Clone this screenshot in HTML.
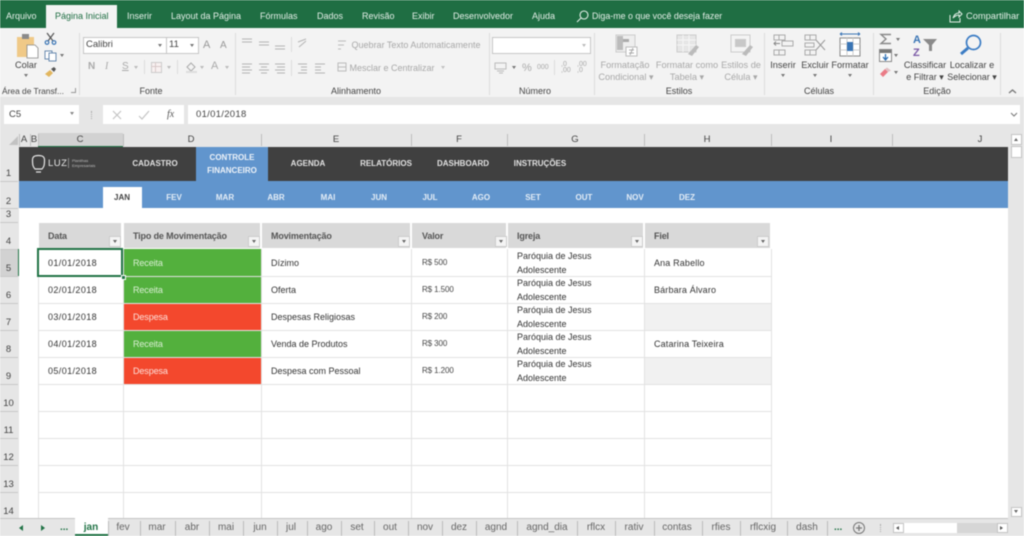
<!DOCTYPE html>
<html lang="pt">
<head>
<meta charset="utf-8">
<title>Excel</title>
<style>
html,body{margin:0;padding:0;width:1024px;height:536px;overflow:hidden;background:#fff}
#p{position:relative;width:1024px;height:536px;overflow:hidden;font-family:"Liberation Sans",sans-serif;filter:blur(.4px)}
#p div,#p svg{position:absolute}
.t{white-space:nowrap;line-height:12px;height:12px}
.tab{top:10px;font-size:9px;color:#e4efe8}
.rb{font-size:9.2px;color:#444;text-align:center;transform:translateX(-50%)}
.dim{font-size:9.2px;color:#a8a8a8;text-align:center;transform:translateX(-50%)}
.grp{top:85px;font-size:9px;color:#444;transform:translateX(-50%)}
.ch{top:134px;font-size:9.5px;color:#444;transform:translateX(-50%)}
.rh{left:0;width:17px;text-align:center;font-size:9.5px;color:#444}
.nav{top:158px;font-size:8px;font-weight:bold;color:#e2e2e2;transform:translateX(-50%)}
.m{top:192px;font-size:8px;font-weight:bold;color:#e4edf6;transform:translateX(-50%)}
.hd{top:230px;font-size:9px;font-weight:bold;color:#555;letter-spacing:-.15px}
.c{font-size:9px;color:#333}
.d{letter-spacing:.4px}
.v{font-size:8px;letter-spacing:-.1px;color:#444}
.n{letter-spacing:.15px}
.w{letter-spacing:-.1px}
.st{top:522px;font-size:10px;color:#666;transform:translateX(-50%)}
.sep{top:521px;width:1px;height:15px;background:#bcbcbc}
.fb{width:10px;height:9px;background:#f4f4f4;border:1px solid #ccc;top:236px}
.fb:after{content:"";position:absolute;left:3px;top:3px;border:2px solid transparent;border-top:3px solid #666}
.vl{width:1px;background:#e2e2e2}
.hl{height:1px;background:#e2e2e2}
.hdv{top:134px;width:1px;height:12px;background:#bdbdbd}
.rs{left:0;width:18px;height:1px;background:#c8c8c8}
.gs{top:33px;width:1px;height:62px;background:#dcdcdc}
.ar{width:0;height:0;border:2px solid transparent;border-top:3px solid #777}
</style>
</head>
<body>
<div id="p">
<!-- title bar -->
<div style="left:0;top:0;width:1024px;height:28px;background:#1f6e43"></div>
<div style="left:46px;top:5px;width:71px;height:23px;background:#f3f3f3"></div>
<div class="t tab" style="left:6px">Arquivo</div>
<div class="t tab" style="left:55px;color:#1f6e43">Página Inicial</div>
<div class="t tab" style="left:127px">Inserir</div>
<div class="t tab" style="left:171px">Layout da Página</div>
<div class="t tab" style="left:260px">Fórmulas</div>
<div class="t tab" style="left:317px">Dados</div>
<div class="t tab" style="left:362px">Revisão</div>
<div class="t tab" style="left:412px">Exibir</div>
<div class="t tab" style="left:453px">Desenvolvedor</div>
<div class="t tab" style="left:532px">Ajuda</div>
<svg style="left:576px;top:10px" width="13" height="13" viewBox="0 0 13 13" fill="none" stroke="#e4efe8" stroke-width="1.1"><circle cx="8" cy="5" r="4"/><path d="M5 8L1 12"/></svg>
<div class="t tab" style="left:592px;font-size:8.9px">Diga-me o que você deseja fazer</div>
<svg style="left:949px;top:10px" width="14" height="13" viewBox="0 0 14 13" fill="none" stroke="#e4efe8" stroke-width="1"><path d="M1 5v7h10V8M4 8c1-3 3-5 6-5V1l3 3-3 3V5C8 5 6 6 4 8z"/></svg>
<div class="t tab" style="left:966px;font-size:9.3px">Compartilhar</div>

<!-- ribbon -->
<div style="left:0;top:28px;width:1024px;height:69px;background:#f3f3f3"></div>
<div style="left:0;top:97px;width:1024px;height:36px;background:#e6e6e6"></div>
<div class="gs" style="left:79px"></div>
<div class="gs" style="left:235px"></div>
<div class="gs" style="left:489px"></div>
<div class="gs" style="left:594px"></div>
<div class="gs" style="left:764px"></div>
<div class="gs" style="left:873px"></div>
<div class="gs" style="left:1000px"></div>

<!-- clipboard -->
<svg style="left:16px;top:33px" width="24" height="26" viewBox="0 0 24 26"><rect x="1" y="4" width="17" height="20" fill="#f0c987"/><rect x="6" y="1" width="7" height="5" fill="#8a8a8a"/><path d="M11 12h8l3 3v10H11z" fill="#fff" stroke="#888" stroke-width=".8"/></svg>
<div class="t rb" style="left:26px;top:59px">Colar</div>
<div class="ar" style="left:24px;top:74px"></div>
<svg style="left:44px;top:32px" width="13" height="13" viewBox="0 0 13 13" fill="none" stroke="#555" stroke-width="1.2"><path d="M3 1l6 8M10 1L4 9"/><circle cx="3" cy="10.5" r="1.8" stroke="#3a75b5"/><circle cx="10" cy="10.5" r="1.8" stroke="#3a75b5"/></svg>
<svg style="left:44px;top:50px" width="13" height="12" viewBox="0 0 13 12" fill="#fff" stroke="#5a7fa8" stroke-width=".9"><rect x="1" y="1" width="7" height="8"/><rect x="5" y="3" width="7" height="8"/></svg>
<div class="ar" style="left:60px;top:54px"></div>
<svg style="left:44px;top:66px" width="13" height="12" viewBox="0 0 13 12"><path d="M1 8l5-4 3 3-4 4z" fill="#e2b65e"/><path d="M7 3l3-2 2 2-2 3z" fill="#555"/></svg>
<div class="t grp" style="left:33px;font-size:8.4px">Área de Transf...</div>
<div style="left:71px;top:88px;width:4px;height:4px;border-right:1px solid #999;border-bottom:1px solid #999"></div>

<!-- fonte -->
<div style="left:83px;top:37px;width:82px;height:15px;background:#fff;border:1px solid #c6c6c6"></div>
<div style="left:166px;top:37px;width:31px;height:15px;background:#fff;border:1px solid #c6c6c6"></div>
<div class="t" style="left:86px;top:39px;font-size:9.5px;color:#444">Calibri</div>
<div class="t" style="left:169px;top:39px;font-size:9.5px;color:#444">11</div>
<div class="ar" style="left:158px;top:44px"></div>
<div class="ar" style="left:190px;top:44px"></div>
<div class="t" style="left:203px;top:39px;font-size:11px;color:#999">A</div>
<div class="t" style="left:220px;top:40px;font-size:10px;color:#999">A</div>
<div class="t" style="left:88px;top:61px;font-size:10px;font-weight:bold;color:#aaa">N</div>
<div class="t" style="left:105px;top:61px;font-size:10px;font-style:italic;font-family:'Liberation Serif',serif;color:#aaa">I</div>
<div class="t" style="left:122px;top:61px;font-size:10px;text-decoration:underline;color:#aaa">S</div>
<div style="left:151px;top:62px;width:9px;height:9px;border:1px solid #ccc;background:#f8f0f0"></div>
<div style="left:155px;top:62px;width:1px;height:10px;background:#d8c8c8"></div>
<div style="left:151px;top:66px;width:10px;height:1px;background:#d8c8c8"></div>
<svg style="left:184px;top:61px" width="14" height="13" viewBox="0 0 14 13"><path d="M3 6l4-4 4 4-4 4z" fill="none" stroke="#aaa"/><rect x="2" y="10" width="11" height="2" fill="#ddd"/></svg>
<div class="t" style="left:211px;top:60px;font-size:11px;color:#aaa">A</div>
<div class="ar" style="left:134px;top:66px;border-top-color:#bbb"></div>
<div class="ar" style="left:167px;top:66px;border-top-color:#bbb"></div>
<div class="ar" style="left:200px;top:66px;border-top-color:#bbb"></div>
<div class="ar" style="left:225px;top:66px;border-top-color:#bbb"></div>
<div class="t grp" style="left:151px">Fonte</div>
<div style="left:144px;top:60px;width:1px;height:14px;background:#ddd"></div>
<div style="left:177px;top:60px;width:1px;height:14px;background:#ddd"></div>

<!-- alinhamento -->
<svg style="left:240px;top:37px" width="110" height="40" viewBox="0 0 110 40" stroke="#b4b4b4" stroke-width="1" fill="none"><path d="M2 2h10M2 5h10M19 5h10M19 8h10M35 9h10M35 12h10"/><path d="M2 27h10M2 30h8M2 33h10M2 36h8M19 27h10M21 30h6M19 33h10M21 36h6M35 27h10M37 30h8M35 33h10M37 36h8"/><path d="M58 27h9M58 36h9M61 30h6M61 33h6M75 27h10M75 36h10M75 30h6M75 33h6"/><path d="M58 5l8-3M59 10l7-6"/></svg>
<div style="left:291px;top:37px;width:1px;height:15px;background:#ddd"></div>
<div style="left:291px;top:60px;width:1px;height:16px;background:#ddd"></div>
<div class="t dim" style="left:416px;top:39px;font-size:9px">Quebrar Texto Automaticamente</div>
<div class="t dim" style="left:392px;top:62px;font-size:9px">Mesclar e Centralizar</div>
<svg style="left:337px;top:38px" width="10" height="36" viewBox="0 0 10 36" stroke="#bbb" fill="none"><path d="M1 3h8M1 7h6M1 11h3"/><rect x="1" y="25" width="8" height="8"/><path d="M1 29h8"/></svg>
<div class="ar" style="left:441px;top:66px;border-top-color:#c0c0c0"></div>
<div class="t grp" style="left:356px">Alinhamento</div>

<!-- numero -->
<div style="left:492px;top:37px;width:97px;height:15px;background:#fff;border:1px solid #c6c6c6"></div>
<div class="ar" style="left:582px;top:44px;border-top-color:#bbb"></div>
<svg style="left:494px;top:62px" width="14" height="12" viewBox="0 0 14 12" fill="none" stroke="#bbb"><rect x="1" y="1" width="11" height="6"/><path d="M3 9h7M5 11h4"/></svg>
<div class="ar" style="left:512px;top:66px"></div>
<div class="t" style="left:522px;top:62px;font-size:11px;color:#aaa">%</div>
<div class="t" style="left:537px;top:62px;font-size:7px;color:#aaa">000</div>
<div style="left:554px;top:60px;width:1px;height:15px;background:#ddd"></div>
<div class="t" style="left:561px;top:62px;font-size:7px;line-height:6px;height:14px;color:#aaa">,0<br>,00</div>
<div class="t" style="left:577px;top:62px;font-size:7px;line-height:6px;height:14px;color:#aaa">,00<br>,0</div>
<div class="t grp" style="left:535px">Número</div>

<!-- estilos -->
<svg style="left:615px;top:34px" width="24" height="24" viewBox="0 0 24 24"><rect x="1" y="1" width="19" height="17" fill="#eee" stroke="#ccc"/><path d="M2 2h6v14H2z" fill="#bbb"/><path d="M8 5h6v3H8z" fill="#aaa"/><rect x="11" y="13" width="11" height="9" fill="#fff" stroke="#bbb"/><path d="M14 16h5M14 19h5M18 14l-3 7" stroke="#aaa" fill="none"/></svg>
<svg style="left:676px;top:34px" width="24" height="24" viewBox="0 0 24 24"><rect x="1" y="1" width="19" height="17" fill="#e6e6e6" stroke="#ccc"/><path d="M1 6h19M1 11h19M7 1v17M13 1v17" stroke="#f6f6f6"/><path d="M12 20l8-9 3 2-7 9z" fill="#bbb"/></svg>
<svg style="left:730px;top:34px" width="24" height="24" viewBox="0 0 24 24"><rect x="1" y="1" width="19" height="17" fill="#f4f4f4" stroke="#ccc"/><rect x="5" y="5" width="11" height="8" fill="#c8c8c8"/><path d="M12 20l8-9 3 2-7 9z" fill="#bbb"/></svg>
<div class="t dim" style="left:625px;top:59px">Formatação</div>
<div class="t dim" style="left:626px;top:71px">Condicional ▾</div>
<div class="t dim" style="left:687px;top:59px">Formatar como</div>
<div class="t dim" style="left:687px;top:71px">Tabela ▾</div>
<div class="t dim" style="left:741px;top:59px">Estilos de</div>
<div class="t dim" style="left:741px;top:71px">Célula ▾</div>
<div class="t grp" style="left:679px">Estilos</div>

<!-- celulas -->
<svg style="left:772px;top:33px" width="24" height="24" viewBox="0 0 24 24" fill="none" stroke="#aaa"><path d="M2 2h11v5H2zM2 17h11v5H2zM7 2v5M7 17v5"/><rect x="10" y="8" width="11" height="5"/><path d="M8 10.500H2M4 8.500l-2 2 2 2" stroke="#888"/></svg>
<svg style="left:803px;top:33px" width="24" height="24" viewBox="0 0 24 24" fill="none" stroke="#aaa"><path d="M2 2h11v5H2zM2 17h11v5H2zM7 2v5M7 17v5M2 10h9v4H2z"/><path d="M13 7l9 10M22 7l-9 10" stroke="#999"/></svg>
<svg style="left:838px;top:32px" width="24" height="26" viewBox="0 0 24 26"><path d="M2 2h20M2 2l2-1.500M2 2l2 1.500M22 2l-2-1.500M22 2l-2 1.500" stroke="#3a75b5" fill="none"/><rect x="2" y="6" width="20" height="18" fill="#fff" stroke="#888"/><path d="M9 6v18M15 6v18M2 12h20M2 18h20" stroke="#ccc"/><rect x="9" y="10" width="6" height="9" fill="#3a75b5"/></svg>
<div class="t rb" style="left:783px;top:59px">Inserir</div>
<div class="t rb" style="left:815px;top:59px">Excluir</div>
<div class="t rb" style="left:850px;top:59px">Formatar</div>
<div class="ar" style="left:781px;top:74px"></div>
<div class="ar" style="left:813px;top:74px"></div>
<div class="ar" style="left:848px;top:74px"></div>
<div class="t grp" style="left:819px">Células</div>

<!-- edicao -->
<svg style="left:879px;top:33px" width="14" height="12" viewBox="0 0 14 12" fill="none" stroke="#888" stroke-width="1.4"><path d="M12 1.500H2l5 4.500-5 4.500h10"/></svg>
<svg style="left:879px;top:49px" width="13" height="13" viewBox="0 0 13 13"><rect x=".5" y=".5" width="12" height="12" fill="#fff" stroke="#888"/><rect x="1" y="1" width="11" height="3" fill="#777"/><path d="M6.500 5v5M4 8l2.500 3L9 8" stroke="#2c6fb5" fill="none" stroke-width="1.300"/></svg>
<svg style="left:879px;top:67px" width="13" height="11" viewBox="0 0 13 11"><path d="M1 7l5-5 3 3-5 5z" fill="#ea7b86"/><path d="M6 2l2-1.500 4 3-3 1.500z" fill="#e0c0c4"/></svg>
<div class="ar" style="left:896px;top:38px"></div>
<div class="ar" style="left:894px;top:54px"></div>
<div class="ar" style="left:894px;top:71px"></div>
<div class="t" style="left:913px;top:34px;font-size:11px;font-weight:bold;color:#3a75b5">A</div>
<div class="t" style="left:913px;top:47px;font-size:11px;font-weight:bold;color:#7b5aa6">Z</div>
<svg style="left:922px;top:38px" width="16" height="14" viewBox="0 0 16 14"><path d="M1 1h14L10 7v6H7V7z" fill="#8a8a8a"/></svg>
<svg style="left:959px;top:33px" width="24" height="24" viewBox="0 0 24 24" fill="none" stroke="#3b7cc4"><circle cx="14.500" cy="9.500" r="7" stroke-width="1.700"/><path d="M9 15l-7 6" stroke-width="3"/></svg>
<div class="t rb" style="left:925px;top:59px">Classificar</div>
<div class="t rb" style="left:925px;top:71px;font-size:9px">e Filtrar ▾</div>
<div class="t rb" style="left:972px;top:59px">Localizar e</div>
<div class="t rb" style="left:972px;top:71px;font-size:9px">Selecionar ▾</div>
<div class="t grp" style="left:937px">Edição</div>
<svg style="left:1008px;top:88px" width="9" height="6" viewBox="0 0 9 6" fill="none" stroke="#777" stroke-width="1.300"><path d="M1 5l3.500-3L8 5"/></svg>

<!-- formula bar -->
<div style="left:4px;top:105px;width:75px;height:19px;background:#fff"></div>
<div class="t" style="left:9px;top:109px;font-size:9.5px;color:#444">C5</div>
<div class="ar" style="left:70px;top:112px;border-top-color:#888"></div>
<div style="left:91px;top:111px;width:1px;height:8px;border-left:1px dotted #aaa"></div>
<div style="left:103px;top:105px;width:81px;height:19px;background:#fff"></div>
<svg style="left:111px;top:109px" width="50" height="12" viewBox="0 0 50 12" fill="none" stroke="#c4c4c4" stroke-width="1.200"><path d="M2 2l8 8M10 2l-8 8M28 7l3 3 7-8"/></svg>
<div class="t" style="left:167px;top:109px;font-size:10px;font-style:italic;font-family:'Liberation Serif',serif;color:#555">fx</div>
<div style="left:188px;top:105px;width:832px;height:19px;background:#fff"></div>
<div class="t" style="left:196px;top:109px;font-size:9.5px;color:#444;letter-spacing:.3px">01/01/2018</div>
<svg style="left:1010px;top:112px" width="8" height="5" viewBox="0 0 8 5" fill="none" stroke="#777"><path d="M1 1l3 3 3-3"/></svg>

<!-- grid headers -->
<div style="left:0;top:133px;width:1008px;height:14px;background:#e6e6e6"></div>
<div style="left:0;top:147px;width:19px;height:372px;background:#e6e6e6"></div>
<div style="left:38px;top:133px;width:85px;height:14px;background:#d2d2d2"></div>
<div style="left:38px;top:146px;width:85px;height:1px;background:#217346"></div>
<div style="left:0;top:249px;width:19px;height:27px;background:#d2d2d2"></div>
<div style="left:18px;top:249px;width:1px;height:27px;background:#217346"></div>
<svg style="left:9px;top:136px" width="9" height="9" viewBox="0 0 9 9"><path d="M9 0v9H0z" fill="#c2c2c2"/></svg>
<div class="t ch" style="left:24px">A</div>
<div class="t ch" style="left:34px">B</div>
<div class="t ch" style="left:80px">C</div>
<div class="t ch" style="left:191px">D</div>
<div class="t ch" style="left:336px">E</div>
<div class="t ch" style="left:459px">F</div>
<div class="t ch" style="left:575px">G</div>
<div class="t ch" style="left:707px">H</div>
<div class="t ch" style="left:831px">I</div>
<div class="t ch" style="left:980px">J</div>
<div class="hdv" style="left:19px"></div><div class="hdv" style="left:30px"></div><div class="hdv" style="left:38px"></div>
<div class="hdv" style="left:123px"></div><div class="hdv" style="left:261px"></div><div class="hdv" style="left:411px"></div>
<div class="hdv" style="left:507px"></div><div class="hdv" style="left:644px"></div><div class="hdv" style="left:771px"></div><div class="hdv" style="left:892px"></div>

<!-- row headers -->
<div class="t rh" style="top:168px">1</div>
<div class="t rh" style="top:196px">2</div>
<div class="t rh" style="top:209px">3</div>
<div class="t rh" style="top:236px">4</div>
<div class="t rh" style="top:263px">5</div>
<div class="t rh" style="top:290px">6</div>
<div class="t rh" style="top:317px">7</div>
<div class="t rh" style="top:344px">8</div>
<div class="t rh" style="top:371px">9</div>
<div class="t rh" style="top:398px">10</div>
<div class="t rh" style="top:425px">11</div>
<div class="t rh" style="top:452px">12</div>
<div class="t rh" style="top:479px">13</div>
<div class="t rh" style="top:506px">14</div>
<div class="rs" style="top:181px"></div><div class="rs" style="top:208px"></div><div class="rs" style="top:222px"></div><div class="rs" style="top:249px"></div><div class="rs" style="top:276px"></div><div class="rs" style="top:303px"></div><div class="rs" style="top:330px"></div><div class="rs" style="top:357px"></div><div class="rs" style="top:384px"></div><div class="rs" style="top:411px"></div><div class="rs" style="top:438px"></div><div class="rs" style="top:465px"></div><div class="rs" style="top:492px"></div>

<!-- nav -->
<div style="left:19px;top:147px;width:989px;height:34px;background:#404040"></div>
<div style="left:19px;top:181px;width:989px;height:27px;background:#6195cd"></div>
<div style="left:196px;top:147px;width:72px;height:34px;background:#6195cd"></div>
<div style="left:103px;top:187px;width:39px;height:21px;background:#fff"></div>
<svg style="left:31px;top:154px" width="15" height="20" viewBox="0 0 15 20" fill="none" stroke="#e8e8e8" stroke-width="1.200"><path d="M4 15C2 13 1.500 11 1.500 6c0-3 1.500-4.500 6-4.500s6 1.500 6 4.500c0 5-.5 7-2.500 9z"/><path d="M5 18h5"/></svg>
<div class="t" style="left:48px;top:158px;font-size:9.5px;color:#e8e8e8;letter-spacing:.5px">LUZ</div>
<div style="left:68px;top:158px;width:1px;height:10px;background:#888"></div>
<div class="t" style="left:72px;top:158px;font-size:4px;line-height:5px;height:10px;color:#bbb">Planilhas<br>Empresariais</div>
<div class="t nav" style="left:155px">CADASTRO</div>
<div class="t nav" style="left:232px;top:152px;color:#eef3f9">CONTROLE</div>
<div class="t nav" style="left:232px;top:165px;color:#eef3f9">FINANCEIRO</div>
<div class="t nav" style="left:308px">AGENDA</div>
<div class="t nav" style="left:386px">RELATÓRIOS</div>
<div class="t nav" style="left:463px">DASHBOARD</div>
<div class="t nav" style="left:540px">INSTRUÇÕES</div>
<div class="t m" style="left:122px;color:#444">JAN</div>
<div class="t m" style="left:174px">FEV</div>
<div class="t m" style="left:225px">MAR</div>
<div class="t m" style="left:276px">ABR</div>
<div class="t m" style="left:328px">MAI</div>
<div class="t m" style="left:379px">JUN</div>
<div class="t m" style="left:430px">JUL</div>
<div class="t m" style="left:481px">AGO</div>
<div class="t m" style="left:533px">SET</div>
<div class="t m" style="left:584px">OUT</div>
<div class="t m" style="left:635px">NOV</div>
<div class="t m" style="left:687px">DEZ</div>

<!-- table header -->
<div style="left:39px;top:223px;width:82px;height:25px;background:#d9d9d9"></div>
<div style="left:124px;top:223px;width:136px;height:25px;background:#d9d9d9"></div>
<div style="left:262px;top:223px;width:148px;height:25px;background:#d9d9d9"></div>
<div style="left:412px;top:223px;width:94px;height:25px;background:#d9d9d9"></div>
<div style="left:508px;top:223px;width:135px;height:25px;background:#d9d9d9"></div>
<div style="left:645px;top:223px;width:125px;height:25px;background:#d9d9d9"></div>
<div class="t hd" style="left:48px">Data</div>
<div class="t hd" style="left:133px">Tipo de Movimentação</div>
<div class="t hd" style="left:271px">Movimentação</div>
<div class="t hd" style="left:422px">Valor</div>
<div class="t hd" style="left:517px">Igreja</div>
<div class="t hd" style="left:654px">Fiel</div>
<div class="fb" style="left:109px"></div>
<div class="fb" style="left:248px"></div>
<div class="fb" style="left:398px"></div>
<div class="fb" style="left:495px"></div>
<div class="fb" style="left:631px"></div>
<div class="fb" style="left:757px"></div>

<!-- body fills -->
<div style="left:123px;top:249px;width:138px;height:54px;background:#53b03d"></div>
<div style="left:123px;top:303px;width:138px;height:27px;background:#f3482d"></div>
<div style="left:123px;top:330px;width:138px;height:27px;background:#53b03d"></div>
<div style="left:123px;top:357px;width:138px;height:27px;background:#f3482d"></div>
<div style="left:644px;top:303px;width:127px;height:27px;background:#f1f1f1"></div>
<div style="left:644px;top:357px;width:127px;height:27px;background:#f1f1f1"></div>

<!-- grid lines -->
<div class="vl" style="left:38px;top:249px;height:270px"></div>
<div class="vl" style="left:123px;top:249px;height:270px"></div>
<div class="vl" style="left:261px;top:249px;height:270px"></div>
<div class="vl" style="left:411px;top:249px;height:270px"></div>
<div class="vl" style="left:507px;top:249px;height:270px"></div>
<div class="vl" style="left:644px;top:249px;height:270px"></div>
<div class="vl" style="left:771px;top:249px;height:270px"></div>
<div class="hl" style="left:38px;top:276px;width:733px"></div>
<div class="hl" style="left:38px;top:303px;width:733px"></div>
<div class="hl" style="left:38px;top:330px;width:733px"></div>
<div class="hl" style="left:38px;top:357px;width:733px"></div>
<div class="hl" style="left:38px;top:384px;width:733px"></div>
<div class="hl" style="left:38px;top:411px;width:733px"></div>
<div class="hl" style="left:38px;top:438px;width:733px"></div>
<div class="hl" style="left:38px;top:465px;width:733px"></div>
<div class="hl" style="left:38px;top:492px;width:733px"></div>

<!-- selection -->
<div style="left:37px;top:248px;width:82px;height:25px;border:2px solid #217346"></div>
<div style="left:121px;top:275px;width:3px;height:3px;background:#217346;border:1px solid #fff"></div>

<!-- row text -->
<div class="t c d" style="left:48px;top:257px">01/01/2018</div>
<div class="t c d" style="left:48px;top:284px">02/01/2018</div>
<div class="t c d" style="left:48px;top:311px">03/01/2018</div>
<div class="t c d" style="left:48px;top:338px">04/01/2018</div>
<div class="t c d" style="left:48px;top:365px">05/01/2018</div>
<div class="t c w" style="left:133px;top:257px;color:#d9eed3">Receita</div>
<div class="t c w" style="left:133px;top:284px;color:#d9eed3">Receita</div>
<div class="t c w" style="left:133px;top:311px;color:#fde0da">Despesa</div>
<div class="t c w" style="left:133px;top:338px;color:#d9eed3">Receita</div>
<div class="t c w" style="left:133px;top:365px;color:#fde0da">Despesa</div>
<div class="t c" style="left:271px;top:257px">Dízimo</div>
<div class="t c" style="left:271px;top:284px">Oferta</div>
<div class="t c" style="left:271px;top:311px">Despesas Religiosas</div>
<div class="t c" style="left:271px;top:338px">Venda de Produtos</div>
<div class="t c" style="left:271px;top:365px">Despesa com Pessoal</div>
<div class="t v" style="left:422px;top:257px">R$ 500</div>
<div class="t v" style="left:422px;top:284px">R$ 1.500</div>
<div class="t v" style="left:422px;top:311px">R$ 200</div>
<div class="t v" style="left:422px;top:338px">R$ 300</div>
<div class="t v" style="left:422px;top:365px">R$ 1.200</div>
<div class="t c" style="left:517px;top:250px">Paróquia de Jesus</div>
<div class="t c" style="left:517px;top:264px">Adolescente</div>
<div class="t c" style="left:517px;top:277px">Paróquia de Jesus</div>
<div class="t c" style="left:517px;top:291px">Adolescente</div>
<div class="t c" style="left:517px;top:304px">Paróquia de Jesus</div>
<div class="t c" style="left:517px;top:318px">Adolescente</div>
<div class="t c" style="left:517px;top:331px">Paróquia de Jesus</div>
<div class="t c" style="left:517px;top:345px">Adolescente</div>
<div class="t c" style="left:517px;top:358px">Paróquia de Jesus</div>
<div class="t c" style="left:517px;top:372px">Adolescente</div>
<div class="t c n" style="left:654px;top:257px">Ana Rabello</div>
<div class="t c n" style="left:654px;top:284px">Bárbara Álvaro</div>
<div class="t c n" style="left:654px;top:338px">Catarina Teixeira</div>

<!-- scrollbars -->
<div style="left:1008px;top:133px;width:16px;height:385px;background:#e6e6e6"></div>
<div style="left:1011px;top:134px;width:9px;height:9px;background:#fff;border:1px solid #c4c4c4"></div>
<div style="left:1011px;top:146px;width:9px;height:10px;background:#fff;border:1px solid #c4c4c4"></div>
<div style="left:1011px;top:507px;width:9px;height:8px;background:#fff;border:1px solid #c4c4c4"></div>
<div style="left:1014px;top:136px;width:0;height:0;border:2px solid transparent;border-bottom:3px solid #666"></div>
<div class="ar" style="left:1014px;top:510px;border-top-color:#666"></div>

<!-- sheet tabs -->
<div style="left:0;top:518px;width:1024px;height:18px;background:#e6e6e6"></div>
<div style="left:0;top:518px;width:1008px;height:1px;background:#c4c4c4"></div>
<div style="left:75px;top:518px;width:33px;height:18px;background:#fff"></div>
<div style="left:75px;top:534px;width:33px;height:2px;background:#217346"></div>
<div style="left:19px;top:525px;width:0;height:0;border:3px solid transparent;border-right:4px solid #217346;border-left:0"></div>
<div style="left:41px;top:525px;width:0;height:0;border:3px solid transparent;border-left:4px solid #217346;border-right:0"></div>
<div class="t" style="left:60px;top:522px;font-size:10px;font-weight:bold;color:#217346">...</div>
<div class="t st" style="left:91px;font-weight:bold;color:#217346">jan</div>
<div class="t st" style="left:123px">fev</div>
<div class="t st" style="left:157px">mar</div>
<div class="t st" style="left:192px">abr</div>
<div class="t st" style="left:226px">mai</div>
<div class="t st" style="left:260px">jun</div>
<div class="t st" style="left:291px">jul</div>
<div class="t st" style="left:324px">ago</div>
<div class="t st" style="left:357px">set</div>
<div class="t st" style="left:390px">out</div>
<div class="t st" style="left:425px">nov</div>
<div class="t st" style="left:459px">dez</div>
<div class="t st" style="left:496px">agnd</div>
<div class="t st" style="left:547px">agnd_dia</div>
<div class="t st" style="left:596px">rflcx</div>
<div class="t st" style="left:634px">rativ</div>
<div class="t st" style="left:677px">contas</div>
<div class="t st" style="left:721px">rfies</div>
<div class="t st" style="left:763px">rflcxig</div>
<div class="t st" style="left:807px">dash</div>
<div class="sep" style="left:108px"></div><div class="sep" style="left:140px"></div><div class="sep" style="left:175px"></div><div class="sep" style="left:209px"></div><div class="sep" style="left:243px"></div><div class="sep" style="left:277px"></div><div class="sep" style="left:307px"></div><div class="sep" style="left:341px"></div><div class="sep" style="left:374px"></div><div class="sep" style="left:408px"></div><div class="sep" style="left:442px"></div><div class="sep" style="left:476px"></div><div class="sep" style="left:517px"></div><div class="sep" style="left:577px"></div><div class="sep" style="left:615px"></div><div class="sep" style="left:654px"></div><div class="sep" style="left:702px"></div><div class="sep" style="left:740px"></div><div class="sep" style="left:787px"></div><div class="sep" style="left:827px"></div>
<div class="t" style="left:834px;top:522px;font-size:10px;font-weight:bold;color:#217346">...</div>
<svg style="left:852px;top:521px" width="14" height="14" viewBox="0 0 14 14" fill="none" stroke="#777" stroke-width="1"><circle cx="7" cy="7" r="5.500"/><path d="M4 7h6M7 4v6" stroke-width="1.300"/></svg>
<div style="left:880px;top:524px;width:1px;height:8px;border-left:1px dotted #aaa"></div>
<div style="left:893px;top:523px;width:114px;height:10px;background:#d6d6d6"></div>
<div style="left:893px;top:523px;width:9px;height:8px;background:#fff;border:1px solid #c4c4c4"></div>
<div style="left:904px;top:523px;width:53px;height:10px;background:#fff"></div>
<div style="left:997px;top:523px;width:9px;height:8px;background:#fff;border:1px solid #c4c4c4"></div>
<div style="left:896px;top:526px;width:0;height:0;border:2.500px solid transparent;border-right:3px solid #555;border-left:0"></div>
<div style="left:1000px;top:526px;width:0;height:0;border:2.500px solid transparent;border-left:3px solid #555;border-right:0"></div>
</div>
</body>
</html>
